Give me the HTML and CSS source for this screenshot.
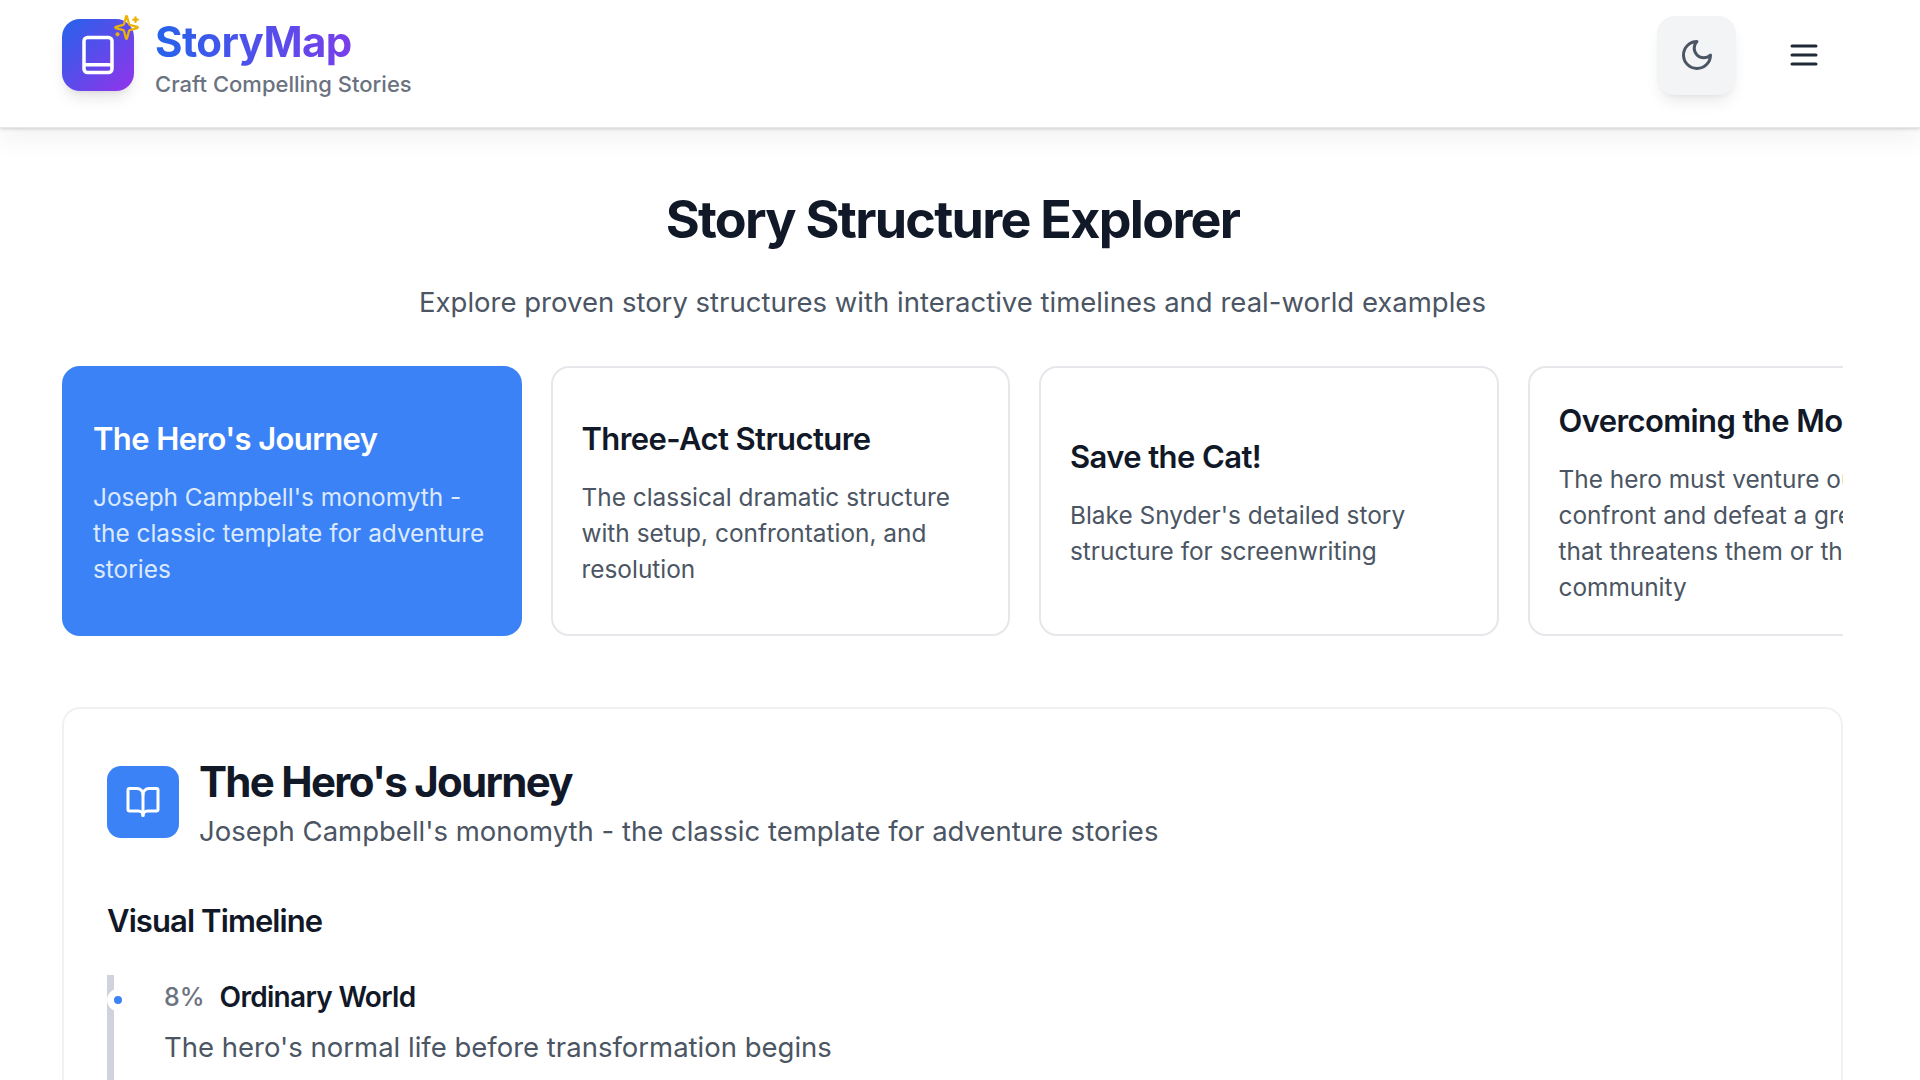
FILE: index.html
```html
<!DOCTYPE html>
<html lang="en">
<head>
<meta charset="utf-8">
<title>StoryMap</title>
<link rel="stylesheet" href="styles.css">
</head>
<body>
<header class="topbar">
  <div class="brand">
    <div class="logo">
      <svg class="logo-book" viewBox="0 0 24 24" fill="none" stroke="#fff" stroke-width="2" stroke-linecap="round" stroke-linejoin="round"><rect x="4" y="2" width="16" height="20" rx="2"/><path d="M4.500 17.500h15"/></svg>
      <svg class="logo-spark" viewBox="0 0 24 24" fill="none" stroke="#eab308" stroke-width="2" stroke-linecap="round" stroke-linejoin="round"><path d="M9.937 15.500A2 2 0 0 0 8.500 14.063l-6.135-1.582a.5.5 0 0 1 0-.962L8.500 9.936A2 2 0 0 0 9.937 8.500l1.582-6.135a.5.500 0 0 1 .963 0L14.063 8.500A2 2 0 0 0 15.500 9.937l6.135 1.581a.5.500 0 0 1 0 .964L15.500 14.063a2 2 0 0 0-1.437 1.437l-1.582 6.135a.5.500 0 0 1-.963 0z"/><path d="M20 3v4"/><path d="M22 5h-4"/><path d="M4 17v2"/><path d="M5 18H3"/></svg>
    </div>
    <div class="brand-text">
      <div class="brand-name">StoryMap</div>
      <div class="brand-tag">Craft Compelling Stories</div>
    </div>
  </div>
  <div class="actions">
    <button class="theme-btn" aria-label="Toggle theme">
      <svg viewBox="0 0 24 24" fill="none" stroke="#4b5563" stroke-width="2" stroke-linecap="round" stroke-linejoin="round"><path d="M12 3a6 6 0 0 0 9 9 9 9 0 1 1-9-9Z"/></svg>
    </button>
    <button class="menu-btn" aria-label="Menu">
      <svg viewBox="0 0 24 24" fill="none" stroke="#1f2937" stroke-width="2" stroke-linecap="round" stroke-linejoin="round"><path d="M4 6h16"/><path d="M4 12h16"/><path d="M4 18h16"/></svg>
    </button>
  </div>
</header>

<main class="content">
  <section class="intro">
    <h1>Story Structure Explorer</h1>
    <p>Explore proven story structures with interactive timelines and real-world examples</p>
  </section>

  <div class="cards">
    <article class="card active">
      <h3>The Hero's Journey</h3>
      <p>Joseph Campbell's monomyth - the classic template for adventure stories</p>
    </article>
    <article class="card">
      <h3>Three-Act Structure</h3>
      <p>The classical dramatic structure with setup, confrontation, and resolution</p>
    </article>
    <article class="card">
      <h3>Save the Cat!</h3>
      <p>Blake Snyder's detailed story structure for screenwriting</p>
    </article>
    <article class="card">
      <h3>Overcoming the Monster</h3>
      <p>The hero must venture out to confront and defeat a great evil that threatens them or their community</p>
    </article>
  </div>

  <section class="panel">
    <div class="panel-head">
      <div class="panel-icon">
        <svg viewBox="0 0 24 24" fill="none" stroke="#fff" stroke-width="2" stroke-linecap="round" stroke-linejoin="round"><path d="M12 7v14"/><path d="M3 18a1 1 0 0 1-1-1V4a1 1 0 0 1 1-1h5a4 4 0 0 1 4 4 4 4 0 0 1 4-4h5a1 1 0 0 1 1 1v13a1 1 0 0 1-1 1h-6a3 3 0 0 0-3 3 3 3 0 0 0-3-3z"/></svg>
      </div>
      <div class="panel-text">
        <h2>The Hero's Journey</h2>
        <p>Joseph Campbell's monomyth - the classic template for adventure stories</p>
      </div>
    </div>
    <h3 class="timeline-title">Visual Timeline</h3>
    <div class="timeline">
      <div class="step">
        <span class="dot"></span>
        <div class="step-head"><span class="pct">8%</span><span class="step-name">Ordinary World</span></div>
        <p>The hero's normal life before transformation begins</p>
      </div>
    </div>
  </section>
</main>
</body>
</html>
```

FILE: styles.css
```css
* { box-sizing: border-box; }
html, body { margin: 0; height: 1080px; overflow: hidden; background: #fff; }
body { font-family: Inter, "Noto Sans", sans-serif; color: #111827; }

.topbar {
  height: 128px;
  padding: 0 77px 17px 62px;
  display: flex;
  align-items: center;
  justify-content: space-between;
  background: #fff;
  box-shadow: 0 1px 3px rgba(0,0,0,.16), 0 12px 24px rgba(0,0,0,.05);
  border-bottom: 1px solid #e5e7eb;
  position: relative;
}
.brand { display: flex; align-items: center; gap: 21px; }
.logo {
  width: 72px; height: 72px; border-radius: 18px;
  background: linear-gradient(135deg, #2563eb, #9333ea);
  box-shadow: 0 10px 15px -3px rgba(0,0,0,.1), 0 4px 6px -4px rgba(0,0,0,.1);
  display: flex; align-items: center; justify-content: center;
  position: relative;
}
.logo-book { width: 42px; height: 42px; }
.logo-spark { position: absolute; width: 27px; height: 27px; top: -5px; right: -6px; }
.brand-text { display: flex; flex-direction: column; gap: 5px; margin-top: 5px; }
.brand-name {
  font-size: 42px; line-height: 48px; font-weight: 700; letter-spacing: -0.6px;
  background: linear-gradient(90deg, #2563eb, #9333ea);
  -webkit-background-clip: text; background-clip: text; color: transparent;
}
.brand-tag { font-size: 22px; line-height: 26px; font-weight: 500; color: #6b7280; }
.actions { display: flex; align-items: center; gap: 29px; }
.theme-btn {
  width: 79px; height: 79px; border: 0; border-radius: 18px; background: #f3f4f6; padding: 0;
  display: flex; align-items: center; justify-content: center;
  box-shadow: 0 10px 15px -3px rgba(0,0,0,.08), 0 4px 6px -4px rgba(0,0,0,.08);
}
.theme-btn svg { width: 36px; height: 36px; }
.menu-btn {
  width: 78px; height: 54px; border: 0; background: transparent; padding: 0;
  display: flex; align-items: center; justify-content: center;
}
.menu-btn svg { width: 36px; height: 36px; }

.content { padding: 0 77px 0 62px; }
.intro { text-align: center; padding-top: 62px; }
.intro h1 { margin: 0; font-size: 52px; line-height: 60px; font-weight: 700; letter-spacing: -1.7px; color: #111827; }
.intro p { margin: 34px 0 0; font-size: 27.5px; line-height: 36px; color: #4b5563; }

.cards { display: flex; gap: 29px; margin-top: 46px; overflow: hidden; }
.card {
  flex: 0 0 459.500px; height: 270px; padding: 4px 29px 0;
  border: 2px solid #e5e7eb; border-radius: 18px; background: #fff;
  display: flex; flex-direction: column; justify-content: center;
}
.card h3 { margin: 0 0 20px; font-size: 31px; line-height: 40px; font-weight: 600; letter-spacing: -0.6px; color: #111827; white-space: nowrap; }
.card p { margin: 0; font-size: 24.4px; line-height: 36px; color: #4b5563; }
.card.active { background: #3b82f6; border-color: #3b82f6; }
.card.active h3 { color: #fff; }
.card.active p { color: #dbeafe; }

.panel {
  margin-top: 71px; height: 500px; padding: 49px 43px;
  border: 2px solid #f0f1f3; border-radius: 18px; background: #fff;
}
.panel-head { display: flex; align-items: flex-start; gap: 20px; }
.panel-icon {
  width: 72px; height: 72px; flex: none; border-radius: 14px; background: #3b82f6; margin-top: 8px;
  display: flex; align-items: center; justify-content: center;
}
.panel-icon svg { width: 36px; height: 36px; }
.panel-text h2 { margin: 0; font-size: 42px; line-height: 48px; font-weight: 700; letter-spacing: -1.7px; color: #111827; }
.panel-text p { margin: 7px 0 0; font-size: 27.5px; line-height: 36px; color: #4b5563; }
.timeline-title { margin: 52px 0 0; font-size: 31px; line-height: 40px; font-weight: 600; letter-spacing: -0.9px; color: #111827; }
.timeline { margin-top: 34px; border-left: 7px solid #d1d3dc; padding: 4px 0 0 50px; height: 300px; position: relative; }
.step { position: relative; }
.dot {
  position: absolute; left: -57px; top: 10px; width: 22px; height: 22px; border-radius: 50%;
  background: #3b82f6; border: 7px solid #fff;
}
.step-head { display: flex; align-items: center; gap: 15px; }
.pct { font-size: 25px; line-height: 36px; color: #6b7280; font-weight: 500; }
.step-name { font-size: 28px; line-height: 36px; font-weight: 600; letter-spacing: -0.7px; color: #111827; }
.step p { margin: 14px 0 0; font-size: 27.5px; line-height: 36px; color: #4b5563; }
```
